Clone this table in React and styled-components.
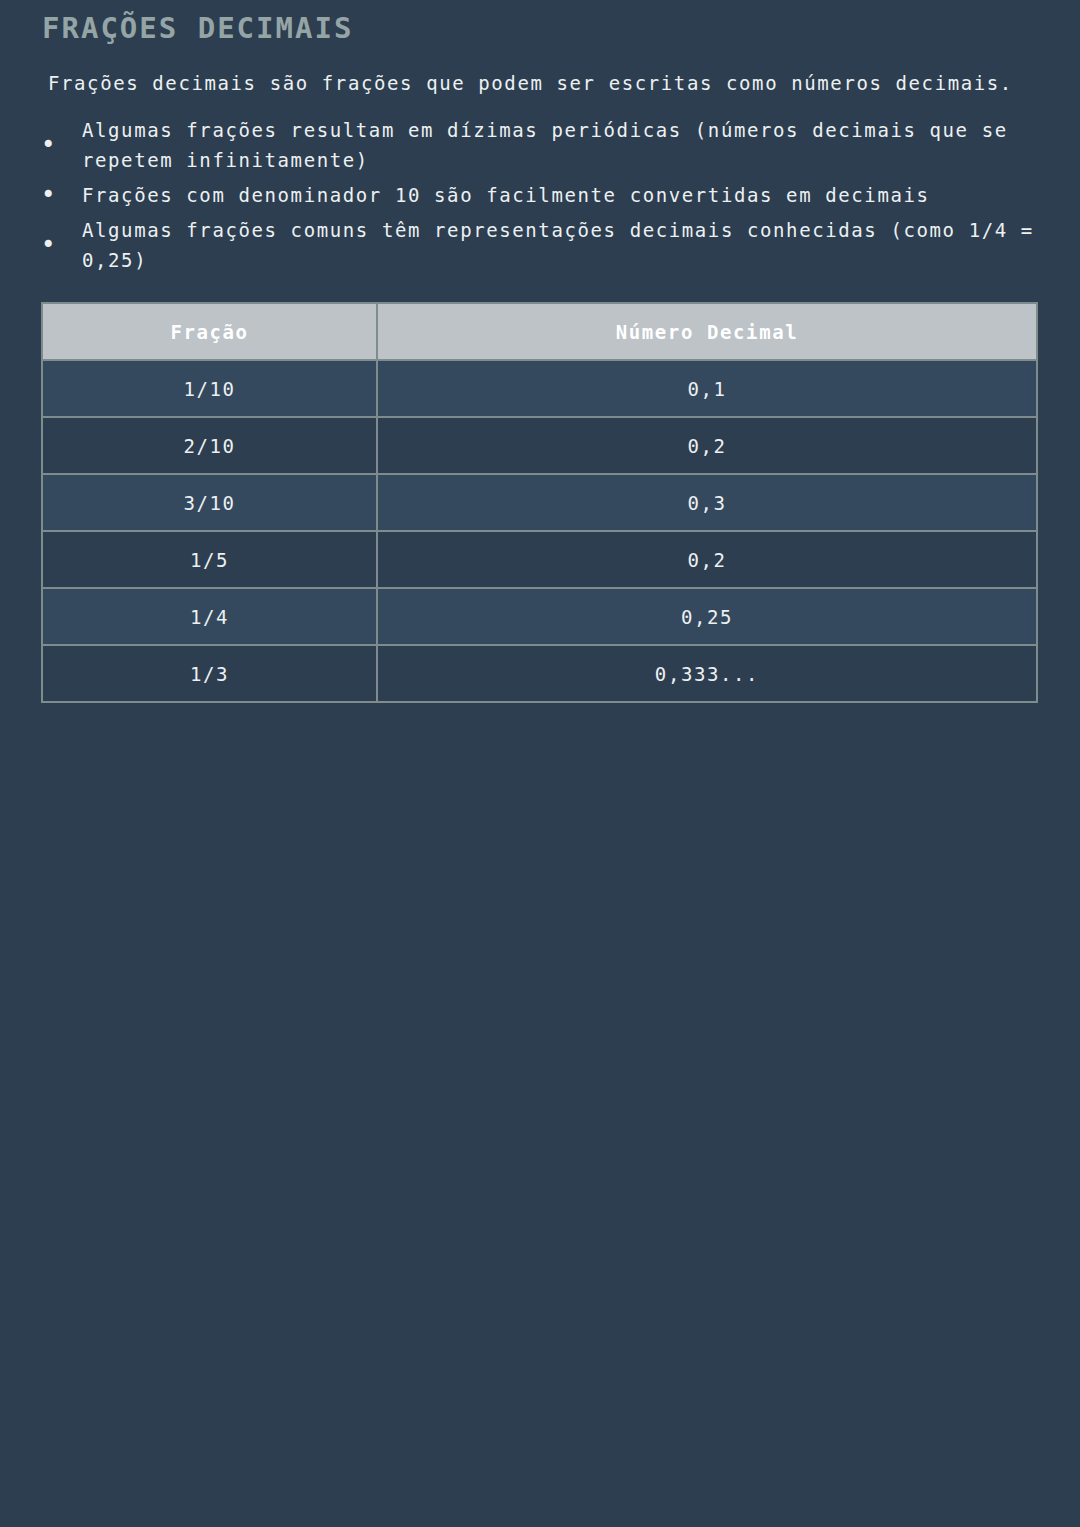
import React from "react";
import styled, { createGlobalStyle } from "styled-components";

const GlobalStyle = createGlobalStyle`
  html, body {
    margin: 0;
    padding: 0;
    background-color: #2c3e50;
  }
  body {
    font-family: "DejaVu Sans Mono", "Liberation Mono", monospace;
  }
`;

const Page = styled.div`
  min-height: 1527px;
  box-sizing: border-box;
  padding: 10px 42px 40px 41px;
  background-color: #2c3e50;
  color: #ecf0f1;
`;

const Title = styled.h1`
  margin: 0;
  padding-left: 1px;
  font-size: 29px;
  line-height: 36px;
  font-weight: bold;
  letter-spacing: 2px;
  color: #95a5a6;
`;

const Intro = styled.p`
  margin: 22px 0 0;
  padding-left: 7px;
  font-size: 19px;
  line-height: 30px;
  letter-spacing: 1.6px;
`;

const List = styled.ul`
  list-style: none;
  margin: 17px 0 0;
  padding: 0;
  display: flex;
  flex-direction: column;
  gap: 5px;
`;

const Item = styled.li`
  display: flex;
  align-items: center;
  font-size: 19px;
  line-height: 30px;
  letter-spacing: 1.6px;
`;

const Bullet = styled.span`
  flex: 0 0 41px;
  font-size: 24px;
  letter-spacing: 0;
`;

const ItemText = styled.span`
  flex: 1;
`;

const Table = styled.table`
  margin-top: 27px;
  width: 997px;
  border-collapse: collapse;
  border: 2px solid #7f8c8d;
  font-size: 19px;
  letter-spacing: 1.6px;
  text-align: center;
`;

const HeadCell = styled.th`
  height: 55px;
  padding: 0;
  width: ${(p) => p.width || "auto"};
  border: 2px solid #7f8c8d;
  background-color: #bdc3c7;
  color: #ffffff;
  font-weight: bold;
`;

const Row = styled.tr`
  background-color: ${(p) => (p.$odd ? "#34495e" : "#2c3e50")};
`;

const Cell = styled.td`
  height: 55px;
  padding: 0;
  border: 2px solid #7f8c8d;
  color: #ecf0f1;
`;

const bullets = [
  "Algumas frações resultam em dízimas periódicas (números decimais que se repetem infinitamente)",
  "Frações com denominador 10 são facilmente convertidas em decimais",
  "Algumas frações comuns têm representações decimais conhecidas (como 1/4 = 0,25)",
];

const rows = [
  ["1/10", "0,1"],
  ["2/10", "0,2"],
  ["3/10", "0,3"],
  ["1/5", "0,2"],
  ["1/4", "0,25"],
  ["1/3", "0,333..."],
];

export default function App() {
  return (
    <>
      <GlobalStyle />
      <Page>
        <Title>FRAÇÕES DECIMAIS</Title>
        <Intro>
          Frações decimais são frações que podem ser escritas como números decimais.
        </Intro>
        <List>
          {bullets.map((text) => (
            <Item key={text}>
              <Bullet>•</Bullet>
              <ItemText>{text}</ItemText>
            </Item>
          ))}
        </List>
        <Table>
          <thead>
            <tr>
              <HeadCell width="333px">Fração</HeadCell>
              <HeadCell>Número Decimal</HeadCell>
            </tr>
          </thead>
          <tbody>
            {rows.map(([fraction, decimal], i) => (
              <Row key={fraction + decimal} $odd={i % 2 === 0}>
                <Cell>{fraction}</Cell>
                <Cell>{decimal}</Cell>
              </Row>
            ))}
          </tbody>
        </Table>
      </Page>
    </>
  );
}
